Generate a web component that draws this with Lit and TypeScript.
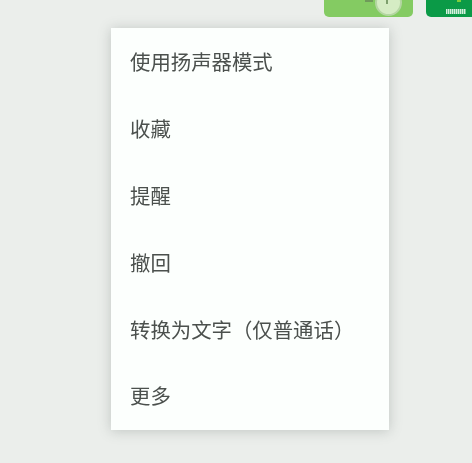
import { LitElement, html, css } from "lit";
import { customElement } from "lit/decorators.js";

const ITEMS = ["使用扬声器模式", "收藏", "提醒", "撤回", "转换为文字（仅普通话）", "更多"];

@customElement("app-root")
export class AppRoot extends LitElement {
  static styles = css`
    :host {
      display: block;
      width: 472px;
      height: 463px;
      background: #ebeeeb;
      overflow: hidden;
      font-family: "Noto Sans CJK SC", "Liberation Sans", sans-serif;
    }
    .top {
      height: 17px;
      display: flex;
      justify-content: flex-end;
      gap: 13px;
    }
    .voice {
      width: 89px;
      height: 17px;
      background: #84cb62;
      border-radius: 0 0 5px 5px;
      position: relative;
      overflow: hidden;
      filter: blur(0.6px);
    }
    .dial {
      position: absolute;
      left: 51px;
      top: -11px;
      width: 23px;
      height: 23px;
      border-radius: 50%;
      background: #d5ecc4;
      border: 2px solid #b4d6a2;
    }
    .dash {
      position: absolute;
      left: 41px;
      top: 0;
      width: 8px;
      height: 1.5px;
      background: #6f9a5a;
    }
    .tick {
      position: absolute;
      left: 62px;
      top: 0;
      width: 2px;
      height: 4px;
      background: #7d9f6d;
    }
    .app {
      width: 46px;
      height: 17px;
      background: #0b9a47;
      border-radius: 0 0 0 5px;
      position: relative;
      filter: blur(0.7px);
    }
    .app .label {
      position: absolute;
      left: 20px;
      top: 9px;
      width: 20px;
      height: 5px;
      background: repeating-linear-gradient(90deg, #d5efdc 0 1px, #6cc392 1px 2px);
    }
    .app .dot {
      position: absolute;
      left: 31px;
      top: 0;
      width: 4px;
      height: 2px;
      background: #7fce3c;
    }
    .wrap {
      padding: 11px 0 0 111px;
    }
    .menu {
      width: 278px;
      height: 402px;
      box-sizing: border-box;
      padding-bottom: 1px;
      background: #fcfffd;
      box-shadow: 0 1px 12px rgba(80, 90, 85, 0.28);
      display: flex;
      flex-direction: column;
    }
    .item {
      flex: 1;
      display: flex;
      align-items: center;
      padding-left: 19px;
      font-size: 20.4px;
      line-height: 1;
      color: #4b504d;
      white-space: nowrap;
      filter: blur(0.45px);
    }
  `;

  render() {
    return html`
      <div class="top">
        <div class="voice">
          <span class="dash"></span>
          <span class="dial"></span>
          <span class="tick"></span>
        </div>
        <div class="app">
          <span class="dot"></span>
          <span class="label"></span>
        </div>
      </div>
      <div class="wrap">
        <div class="menu">
          ${ITEMS.map((t) => html`<div class="item">${t}</div>`)}
        </div>
      </div>
    `;
  }
}
